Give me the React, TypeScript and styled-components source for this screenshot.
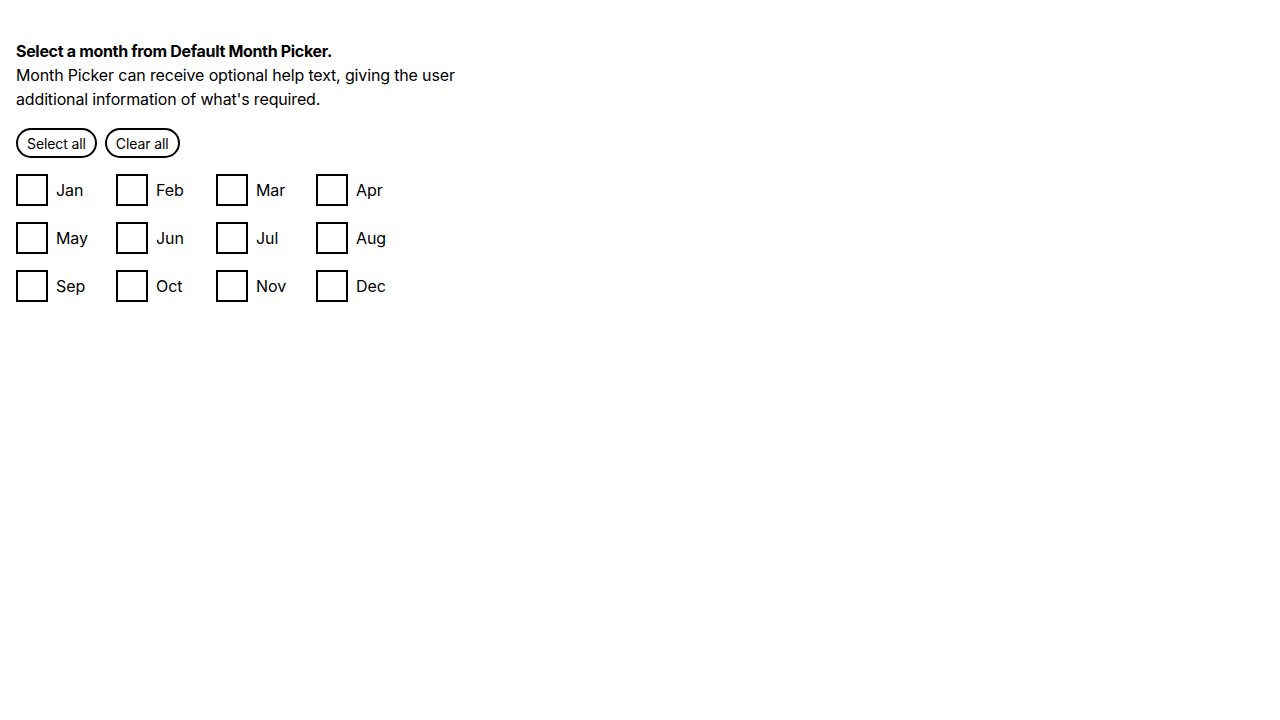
import React, { useState } from 'react'
import styled, { createGlobalStyle } from 'styled-components'

const GlobalStyle = createGlobalStyle`
  body {
    margin: 0;
    background: #fff;
    color: #000;
    font-family: 'Inter', 'Noto Sans', sans-serif;
  }
`

const Page = styled.div`
  padding: 39px 16px 16px;
`

const Fieldset = styled.fieldset`
  border: 0;
  margin: 0;
  padding: 0;
  max-width: 460px;
`

const Legend = styled.legend`
  padding: 0;
  font-size: 16px;
  line-height: 24px;
  font-weight: 700;
  letter-spacing: -0.32px;
`

const HelpText = styled.p`
  margin: 0;
  font-size: 16px;
  line-height: 24px;
  letter-spacing: -0.15px;
`

const Actions = styled.div`
  display: flex;
  gap: 8px;
  margin-top: 17px;
`

const PillButton = styled.button`
  height: 30px;
  padding: 0 9px;
  border: 2px solid #000;
  border-radius: 15px;
  background: #fff;
  color: #000;
  font-family: inherit;
  font-size: 14px;
  letter-spacing: -0.1px;
  cursor: pointer;
`

const Grid = styled.div`
  display: grid;
  grid-template-columns: repeat(4, 100px);
  row-gap: 16px;
  margin-top: 16px;
`

const Option = styled.label`
  display: flex;
  align-items: center;
  gap: 8px;
  font-size: 16px;
  letter-spacing: -0.1px;
  cursor: pointer;
`

const Box = styled.span<{ $checked: boolean }>`
  width: 32px;
  height: 32px;
  box-sizing: border-box;
  border: 2px solid #000;
  background: ${(p) => (p.$checked ? '#000' : '#fff')};
  display: flex;
  align-items: center;
  justify-content: center;
`

const HiddenInput = styled.input`
  position: absolute;
  opacity: 0;
  width: 0;
  height: 0;
`

const months = ['Jan', 'Feb', 'Mar', 'Apr', 'May', 'Jun', 'Jul', 'Aug', 'Sep', 'Oct', 'Nov', 'Dec']

const App: React.FC = () => {
  const [selected, setSelected] = useState<string[]>([])

  const toggle = (m: string) => {
    setSelected((s) => (s.includes(m) ? s.filter((x) => x !== m) : [...s, m]))
  }

  return (
    <>
      <GlobalStyle />
      <Page>
        <Fieldset>
          <Legend>Select a month from Default Month Picker.</Legend>
          <HelpText>
            Month Picker can receive optional help text, giving the user additional information of
            what's required.
          </HelpText>
          <Actions>
            <PillButton type="button" onClick={() => setSelected(months)}>
              Select all
            </PillButton>
            <PillButton type="button" onClick={() => setSelected([])}>
              Clear all
            </PillButton>
          </Actions>
          <Grid>
            {months.map((m) => {
              const checked = selected.includes(m)
              return (
                <Option key={m}>
                  <HiddenInput type="checkbox" checked={checked} onChange={() => toggle(m)} />
                  <Box $checked={checked}>
                    {checked && (
                      <svg width="20" height="20" viewBox="0 0 20 20">
                        <path d="M4 10l4 4 8-8" stroke="#fff" strokeWidth="2.5" fill="none" />
                      </svg>
                    )}
                  </Box>
                  {m}
                </Option>
              )
            })}
          </Grid>
        </Fieldset>
      </Page>
    </>
  )
}

export default App
